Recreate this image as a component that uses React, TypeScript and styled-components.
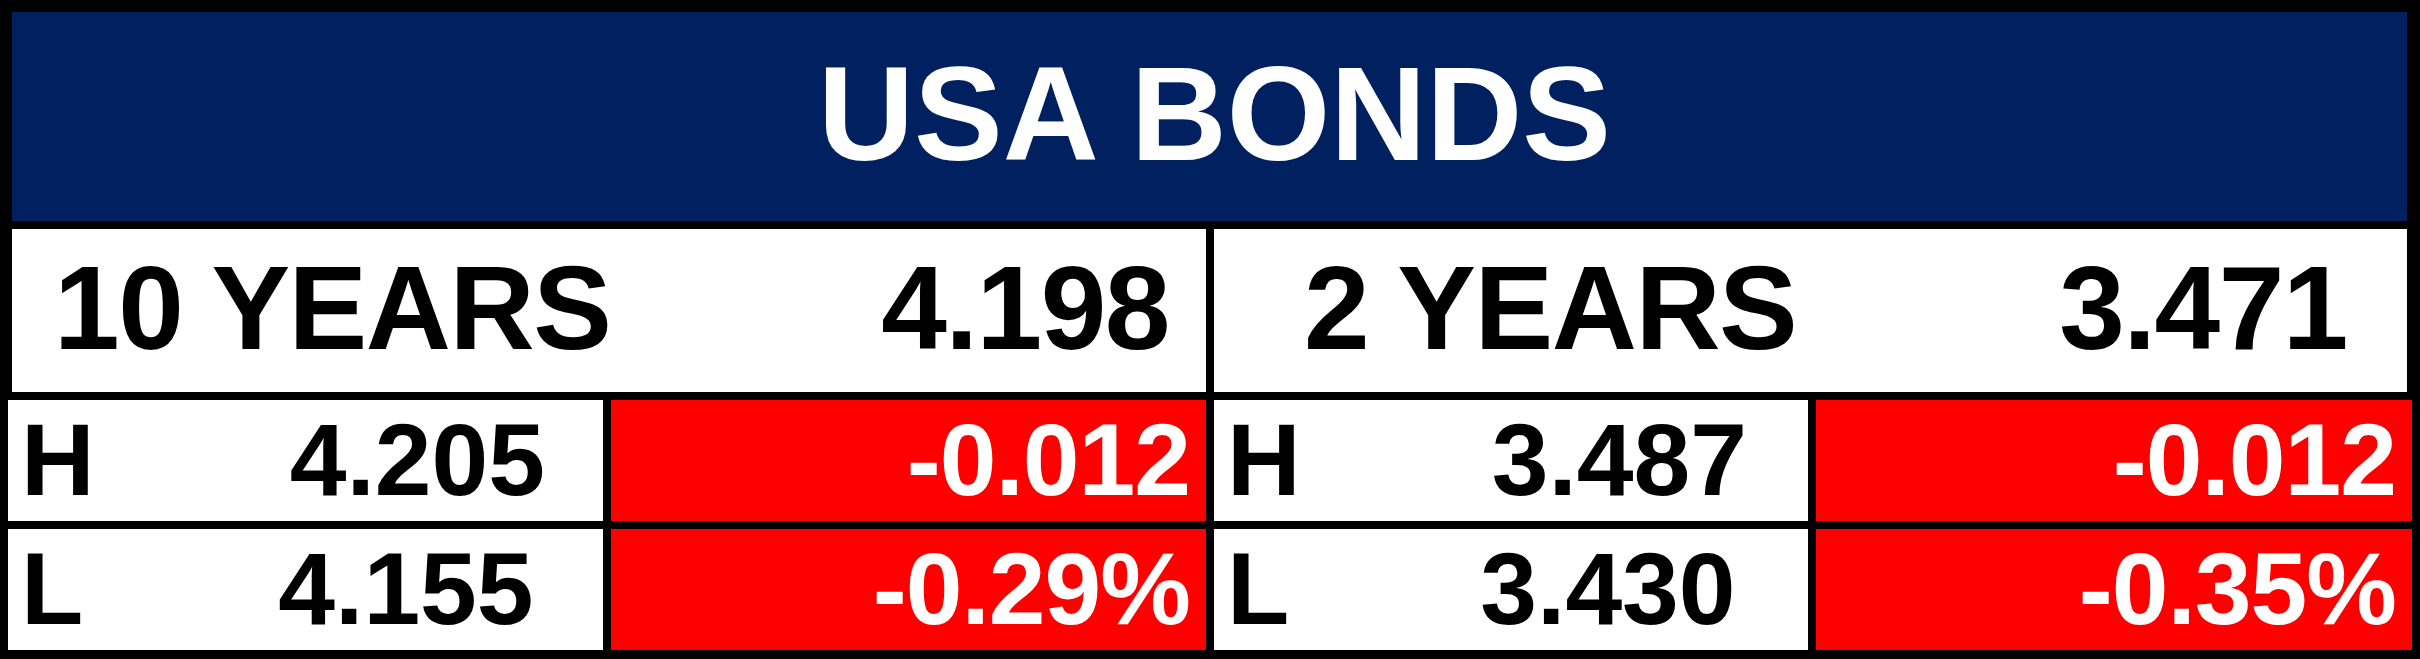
import React from "react";
import styled, { createGlobalStyle } from "styled-components";

const GlobalStyle = createGlobalStyle`
  html, body {
    margin: 0;
    padding: 0;
    background: #000;
  }
  body {
    font-family: "Liberation Sans", Arial, sans-serif;
  }
`;

const Board = styled.div`
  width: 2420px;
  height: 659px;
  box-sizing: border-box;
  padding-top: 12px;
  background: #000;
  display: flex;
  flex-direction: column;
  gap: 8px;
  font-family: "Liberation Sans", Arial, sans-serif;
  font-weight: bold;
`;

const Header = styled.div`
  height: 209px;
  margin: 0 13px 0 12px;
  box-sizing: border-box;
  padding: 0 0 5px 10px;
  background: #002060;
  color: #fff;
  font-size: 133px;
  display: flex;
  align-items: center;
  justify-content: center;
`;

const TermRow = styled.div`
  height: 163px;
  margin: 0 13px 0 12px;
  display: grid;
  grid-template-columns: 1194px 1193px;
  gap: 8px;
`;

const TermCell = styled.div<{ $left: number; $right: number }>`
  background: #fff;
  color: #000;
  font-size: 118px;
  letter-spacing: -1.5px;
  box-sizing: border-box;
  padding: 0 ${(p) => p.$right}px 5px ${(p) => p.$left}px;
  display: flex;
  align-items: center;
  justify-content: space-between;
  white-space: nowrap;
`;

const StatRow = styled.div`
  height: 121px;
  margin: 0 8px;
  display: grid;
  grid-template-columns: 595px 595px 594px 596px;
  gap: 8px;
`;

const RangeCell = styled.div<{ $gap: number }>`
  background: #fff;
  color: #000;
  font-size: 102px;
  padding-left: 13px;
  display: flex;
  align-items: center;
  gap: ${(p) => p.$gap}px;
  white-space: nowrap;
`;

const ChangeCell = styled.div`
  background: #ff0000;
  color: #fff;
  font-size: 102px;
  letter-spacing: -1px;
  padding-right: 16px;
  display: flex;
  align-items: center;
  justify-content: flex-end;
  white-space: nowrap;
`;

type Bond = {
  term: string;
  last: string;
  high: string;
  low: string;
  change: string;
  pct: string;
  pad: [number, number];
  gap: number;
};

const bonds: Bond[] = [
  { term: "10 YEARS", last: "4.198", high: "4.205", low: "4.155", change: "-0.012", pct: "-0.29%", pad: [42, 37], gap: 195 },
  { term: "2 YEARS", last: "3.471", high: "3.487", low: "3.430", change: "-0.012", pct: "-0.35%", pad: [90, 60], gap: 191 },
];

const App = () => {
  return (
    <>
      <GlobalStyle />
      <Board>
        <Header>USA BONDS</Header>
        <TermRow>
          {bonds.map((b) => (
            <TermCell key={b.term} $left={b.pad[0]} $right={b.pad[1]}>
              <span>{b.term}</span>
              <span>{b.last}</span>
            </TermCell>
          ))}
        </TermRow>
        <StatRow>
          {bonds.map((b) => (
            <React.Fragment key={b.term}>
              <RangeCell $gap={b.gap}>
                <span>H</span>
                <span>{b.high}</span>
              </RangeCell>
              <ChangeCell>{b.change}</ChangeCell>
            </React.Fragment>
          ))}
        </StatRow>
        <StatRow>
          {bonds.map((b) => (
            <React.Fragment key={b.term}>
              <RangeCell $gap={b.gap}>
                <span>L</span>
                <span>{b.low}</span>
              </RangeCell>
              <ChangeCell>{b.pct}</ChangeCell>
            </React.Fragment>
          ))}
        </StatRow>
      </Board>
    </>
  );
};

export default App;
